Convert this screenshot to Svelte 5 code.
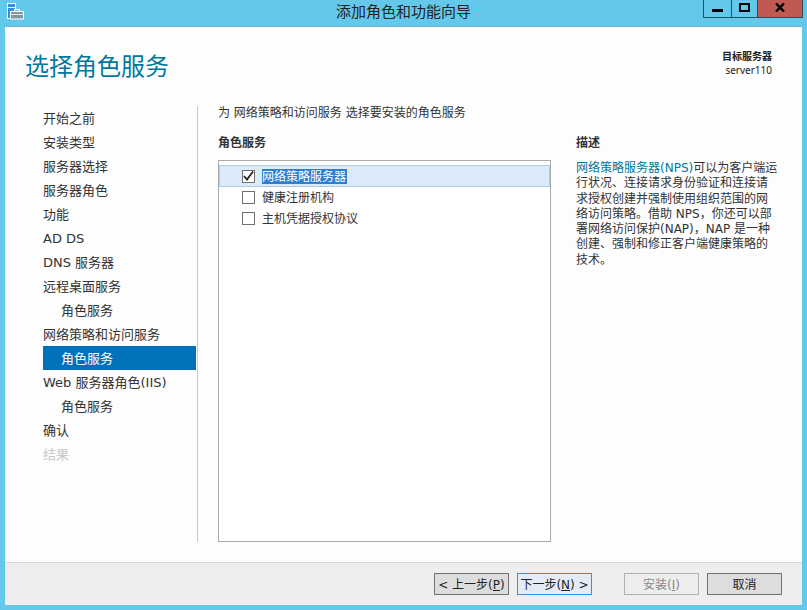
<script>
	const steps = [
		{ label: '开始之前' },
		{ label: '安装类型' },
		{ label: '服务器选择' },
		{ label: '服务器角色' },
		{ label: '功能' },
		{ label: 'AD DS' },
		{ label: 'DNS 服务器' },
		{ label: '远程桌面服务' },
		{ label: '角色服务', sub: true },
		{ label: '网络策略和访问服务' },
		{ label: '角色服务', sub: true, active: true },
		{ label: 'Web 服务器角色(IIS)' },
		{ label: '角色服务', sub: true },
		{ label: '确认' },
		{ label: '结果', disabled: true }
	];

	const services = [
		{ label: '网络策略服务器', checked: true, selected: true },
		{ label: '健康注册机构' },
		{ label: '主机凭据授权协议' }
	];
</script>

<div class="window">
	<header class="titlebar">
		<svg class="appicon" width="17" height="17" viewBox="0 0 17 17">
			<rect x="0.5" y="0.5" width="8" height="15" fill="#2f8fe0" stroke="#fff" />
			<rect x="1" y="4" width="7" height="1" fill="#fff" />
			<rect x="3.5" y="8.5" width="13" height="7.5" fill="#8796a3" stroke="#fff" />
			<rect x="7.5" y="6.5" width="5" height="2" fill="#63c8ea" stroke="#fff" />
			<rect x="4" y="11" width="12" height="1" fill="#dfe6ea" />
		</svg>
		<div class="title">添加角色和功能向导</div>
		<div class="controls">
			<div class="ctl min"><span></span></div>
			<div class="ctl max"><span></span></div>
			<div class="ctl close">
				<svg width="10" height="9" viewBox="0 0 10 9">
					<path d="M1 0.5 L9 8.5 M9 0.5 L1 8.5" stroke="#000" stroke-width="2.4" fill="none" />
				</svg>
			</div>
		</div>
	</header>

	<div class="client">
		<div class="top">
			<h1>选择角色服务</h1>
			<div class="target">
				<strong>目标服务器</strong>
				<span>server110</span>
			</div>
		</div>

		<div class="body">
			<nav>
				{#each steps as step}
					<div class="step" class:sub={step.sub} class:active={step.active} class:disabled={step.disabled}>
						{step.label}
					</div>
				{/each}
			</nav>

			<section class="content">
				<p class="intro">为 网络策略和访问服务 选择要安装的角色服务</p>
				<div class="columns">
					<div class="services">
						<h2>角色服务</h2>
						<div class="list">
							{#each services as s}
								<div class="row" class:selected={s.selected}>
									<span class="box">
										{#if s.checked}
											<svg width="11" height="10" viewBox="0 0 11 10">
												<path d="M1 5 L4 8.5 L10 0.5" stroke="#222" stroke-width="1.8" fill="none" />
											</svg>
										{/if}
									</span>
									<span class="name">{s.label}</span>
								</div>
							{/each}
						</div>
					</div>
					<aside class="desc">
						<h2>描述</h2>
						<p><span class="link">网络策略服务器(NPS)</span>可以为客户端运行状况、连接请求身份验证和连接请求授权创建并强制使用组织范围的网络访问策略。借助 NPS，你还可以部署网络访问保护(NAP)，NAP 是一种创建、强制和修正客户端健康策略的技术。</p>
					</aside>
				</div>
			</section>
		</div>

		<footer>
			<button class="prev">&lt; 上一步(<u>P</u>)</button>
			<button class="next">下一步(<u>N</u>) &gt;</button>
			<button class="install" disabled>安装(<u>I</u>)</button>
			<button class="cancel">取消</button>
		</footer>
	</div>
</div>

<style>
	:global(body) {
		margin: 0;
	}

	.window {
		width: 807px;
		height: 610px;
		box-sizing: border-box;
		padding: 0 5px 5px;
		background: #63c8ea;
		display: flex;
		flex-direction: column;
		font-family: "Noto Sans", "Noto Sans CJK SC", sans-serif;
		font-size: 12px;
		color: #333;
		overflow: hidden;
	}

	.titlebar {
		height: 27px;
		flex: none;
		display: flex;
		position: relative;
		box-sizing: border-box;
		border-bottom: 1px solid #74b4cc;
	}

	.appicon {
		position: absolute;
		left: 2px;
		top: 3px;
	}

	.title {
		flex: 1;
		text-align: center;
		font-size: 15px;
		line-height: 23px;
		color: #222;
	}

	.controls {
		position: absolute;
		right: -1px;
		top: 0;
		display: flex;
		height: 18px;
	}

	.ctl {
		box-sizing: border-box;
		height: 18px;
		border: 1px solid #2d4a5c;
		border-top: none;
		margin-left: -1px;
		display: flex;
		align-items: center;
		justify-content: center;
	}

	.min {
		width: 29px;
	}

	.min span {
		width: 11px;
		height: 3px;
		background: #000;
		margin-top: 4px;
	}

	.max {
		width: 27px;
	}

	.max span {
		width: 7px;
		height: 5px;
		border: 2px solid #000;
		margin-top: -3px;
	}

	.close {
		width: 46px;
		background: #c05a50;
	}

	.close svg {
		margin-top: -3px;
	}

	.client {
		flex: 1;
		min-height: 0;
		background: #fdfdfd;
		display: flex;
		flex-direction: column;
	}

	.top {
		height: 79px;
		flex: none;
		box-sizing: border-box;
		display: flex;
		justify-content: space-between;
		padding: 0 30px 0 20px;
	}

	h1 {
		margin: 22px 0 0;
		font-size: 24px;
		line-height: 34px;
		font-weight: 400;
		color: #00789c;
	}

	.target {
		margin-top: 22px;
		display: flex;
		flex-direction: column;
		align-items: flex-end;
		font-size: 10px;
		line-height: 14px;
		color: #222;
	}

	.target strong {
		font-weight: 700;
	}

	.body {
		flex: 1;
		min-height: 0;
		display: flex;
		padding-bottom: 20px;
	}

	nav {
		width: 193px;
		box-sizing: border-box;
		padding-left: 38px;
		border-right: 1px solid #c8c8c8;
		flex: none;
		margin-right: 20px;
	}

	.step {
		width: 153px;
		height: 24px;
		box-sizing: border-box;
		padding-top: 1px;
		line-height: 24px;
		font-family: "DejaVu Sans", "Noto Sans CJK SC", sans-serif;
		font-size: 13px;
		color: #333;
		white-space: nowrap;
	}

	.step.sub {
		padding-left: 18px;
	}

	.step.active {
		background: #0072bc;
		color: #fff;
	}

	.step.disabled {
		color: #c8c8c8;
	}

	.content {
		flex: 1;
		min-width: 0;
		display: flex;
		flex-direction: column;
		padding-right: 30px;
	}

	.intro {
		margin: 0;
		height: 27px;
		line-height: 14px;
		font-family: "DejaVu Sans", "Noto Sans CJK SC", sans-serif;
		font-size: 12px;
	}

	.columns {
		flex: 1;
		min-height: 0;
		display: flex;
		gap: 25px;
	}

	.services {
		width: 333px;
		display: flex;
		flex-direction: column;
		flex: none;
	}

	h2 {
		margin: 0;
		height: 27px;
		line-height: 20px;
		font-size: 12px;
		font-weight: 700;
		color: #333;
	}

	.list {
		flex: 1;
		box-sizing: border-box;
		background: #fff;
		border: 1px solid #ababab;
		padding-top: 4px;
	}

	.row {
		height: 21px;
		box-sizing: border-box;
		display: flex;
		align-items: center;
		padding-left: 23px;
		font-size: 12px;
	}

	.row.selected {
		height: 22px;
		background: #dcebfb;
		border: 1px solid #a9cbe8;
		padding-left: 22px;
	}

	.box {
		width: 13px;
		height: 13px;
		box-sizing: border-box;
		border: 1px solid #707070;
		background: #fff;
		display: flex;
		align-items: center;
		justify-content: center;
		margin-right: 7px;
		flex: none;
	}

	.name {
		line-height: 15px;
	}

	.row.selected .name {
		padding-right: 1px;
		background: #2f7fd0;
		color: #fff;
	}

	.desc {
		flex: 1;
		min-width: 0;
	}

	.desc p {
		margin: 1px 0 0;
		line-height: 15.3px;
		font-family: "DejaVu Sans", "Noto Sans CJK SC", sans-serif;
		font-size: 12px;
		width: 203px;
	}

	.link {
		color: #00789c;
	}

	footer {
		height: 43px;
		flex: none;
		box-sizing: border-box;
		background: #eeeeee;
		border-top: 1px solid #d6d6d6;
		display: flex;
		align-items: flex-start;
		padding: 10px 0 0 429px;
	}

	button {
		width: 75px;
		height: 22px;
		padding: 1px 0 0;
		box-sizing: border-box;
		background: #dddddd;
		border: 1px solid #707070;
		font: inherit;
		font-family: "DejaVu Sans", "Noto Sans CJK SC", sans-serif;
		font-size: 12px;
		color: #222;
		line-height: 18px;
		white-space: nowrap;
	}

	.prev {
		margin-right: 8px;
	}

	.next {
		background: #e3ecf6;
		border-color: #3c90e0;
		margin-right: 32px;
	}

	.install {
		background: #eeeeee;
		border-color: #adb2b5;
		color: #888;
		margin-right: 8px;
	}
</style>
